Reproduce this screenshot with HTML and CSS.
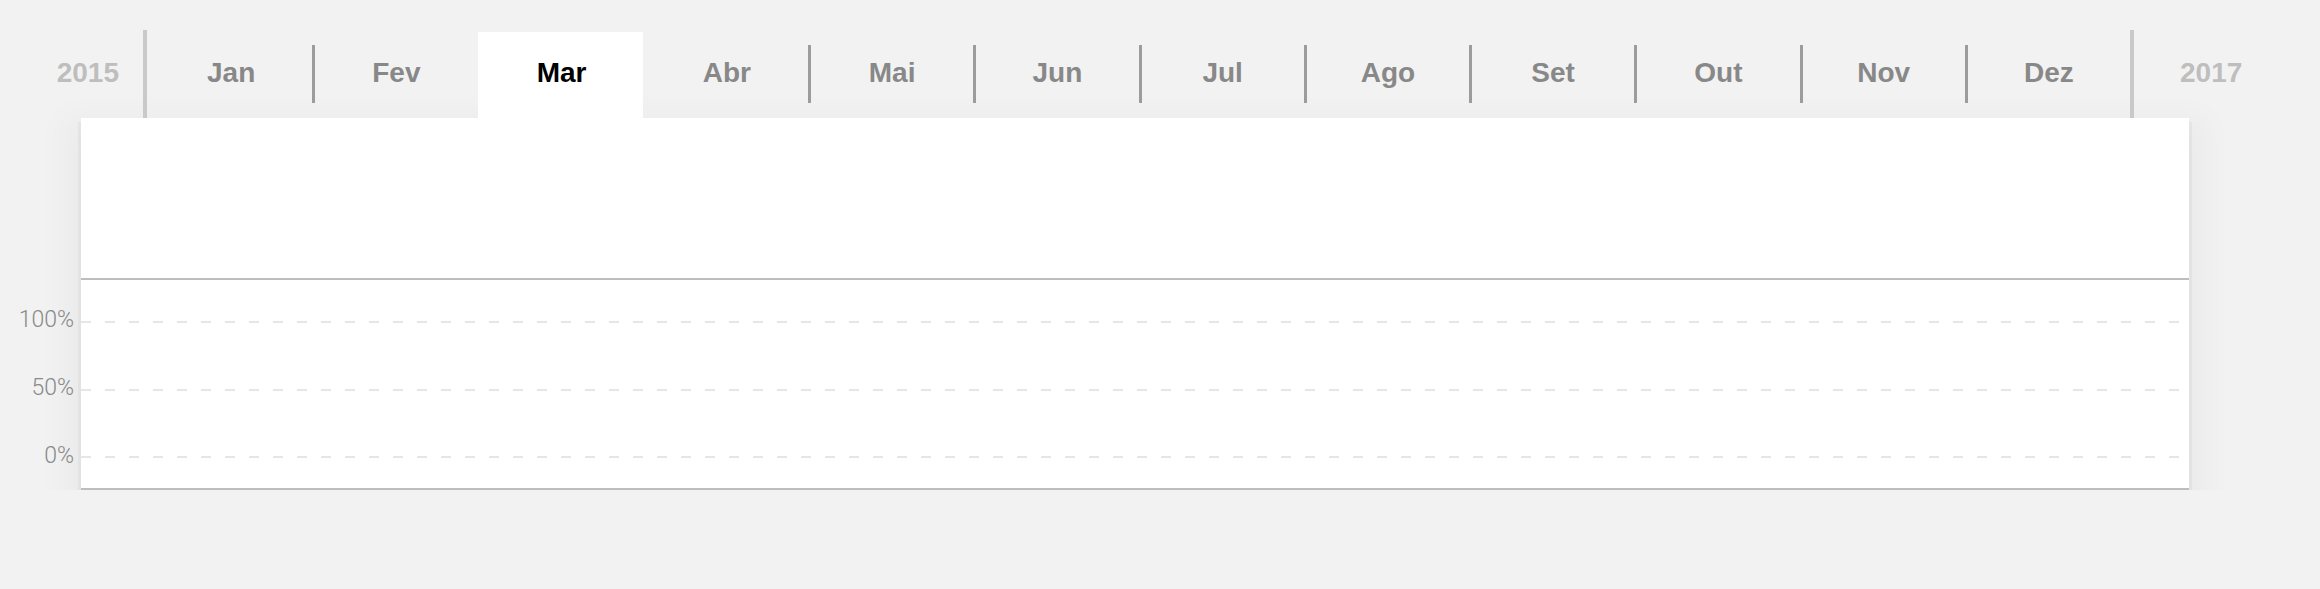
FILE: index.html
```html
<!DOCTYPE html>
<html lang="pt">
<head>
<meta charset="utf-8">
<title>Linha do tempo</title>
<link rel="stylesheet" href="styles.css">
</head>
<body>
<div class="page">
  <nav class="timeline">
    <div class="year year-prev">2015</div>
    <div class="months">
      <div class="month first"><span class="label">Jan</span></div>
      <div class="month"><span class="label">Fev</span></div>
      <div class="month active"><span class="label">Mar</span></div>
      <div class="month after-active"><span class="label">Abr</span></div>
      <div class="month"><span class="label">Mai</span></div>
      <div class="month"><span class="label">Jun</span></div>
      <div class="month"><span class="label">Jul</span></div>
      <div class="month"><span class="label">Ago</span></div>
      <div class="month"><span class="label">Set</span></div>
      <div class="month"><span class="label">Out</span></div>
      <div class="month"><span class="label">Nov</span></div>
      <div class="month"><span class="label">Dez</span></div>
    </div>
    <div class="year year-next">2017</div>
  </nav>
  <div class="chart-row">
    <div class="axis">
      <span class="tick">100%</span>
      <span class="tick">50%</span>
      <span class="tick">0%</span>
    </div>
    <section class="card">
      <div class="card-top"></div>
      <div class="plot">
        <div class="gridline"></div>
        <div class="gridline"></div>
        <div class="gridline"></div>
      </div>
    </section>
  </div>
</div>
</body>
</html>
```
FILE: styles.css
```css
html, body {
  margin: 0;
  padding: 0;
  background: #f2f2f2;
}

.page {
  padding-top: 30px;
  font-family: "Liberation Sans", Arial, Helvetica, sans-serif;
}

.timeline {
  position: relative;
  z-index: 1;
  display: flex;
  height: 88px;
}

.year {
  display: flex;
  align-items: center;
  padding-bottom: 3px;
  box-sizing: border-box;
  font-size: 28px;
  font-weight: bold;
  color: #bebebe;
}

.year-prev {
  width: 147px;
  padding-right: 24px;
  justify-content: flex-end;
  border-right: 4px solid #c9c9c9;
}

.year-next {
  padding-left: 46px;
  border-left: 4px solid #c9c9c9;
}

.months {
  width: 1983px;
  display: grid;
  grid-template-columns: repeat(12, 1fr);
}

.month {
  display: flex;
  align-items: center;
  font-size: 28px;
  font-weight: bold;
  color: #888888;
}

.month::before {
  content: "";
  flex: 0 0 3px;
  height: 58px;
  margin-top: -1px;
  background: #9c9c9c;
}

.label {
  flex: 1;
  text-align: center;
  margin-top: -3px;
}

.first::before,
.active::before,
.after-active::before {
  visibility: hidden;
}

.active {
  margin-top: 2px;
  background: #ffffff;
  color: #000000;
}

.active .label {
  margin-top: -5px;
}

.chart-row {
  display: flex;
}

.axis {
  width: 74px;
  padding-right: 7px;
  padding-top: 190px;
  display: flex;
  flex-direction: column;
  align-items: flex-end;
  gap: 43.75px;
  font-family: Roboto, "Liberation Sans", sans-serif;
  font-weight: 300;
  font-size: 23px;
  line-height: 24px;
  color: #8a8a8a;
}

.card {
  width: 2108px;
  background: #ffffff;
  border-bottom: 2px solid #bdbdbd;
  box-shadow: 0 7px 0 3px rgba(0, 0, 0, 0.035),
              0 16px 30px 18px rgba(0, 0, 0, 0.03);
}

.card-top {
  height: 160px;
  border-bottom: 2px solid #bdbdbd;
}

.plot {
  height: 208px;
  box-sizing: border-box;
  padding: 41px 0 30px;
  display: flex;
  flex-direction: column;
  justify-content: space-between;
}

.gridline {
  height: 2px;
  background: repeating-linear-gradient(to right, #e6e6e6 0 10px, transparent 10px 24px);
}
```
